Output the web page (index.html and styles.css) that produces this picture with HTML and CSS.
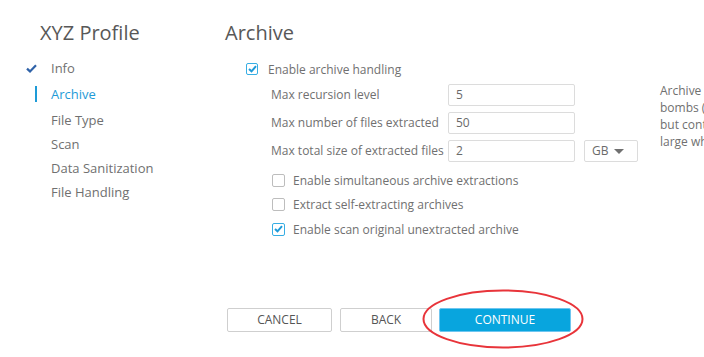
FILE: index.html
```html
<!DOCTYPE html>
<html>
<head>
<meta charset="utf-8">
<link rel="stylesheet" href="styles.css">
</head>
<body>
<div class="page">
  <aside class="sidebar">
    <h1 class="title">XYZ Profile</h1>
    <ul class="nav">
      <li class="nav-item done">
        <svg class="nav-check" width="11" height="9" viewBox="0 0 11 9"><path d="M1 4.6 L4 7.4 L10 1.2" fill="none" stroke="#2f62a8" stroke-width="2.2"/></svg>
        Info
      </li>
      <li class="nav-item active"><span class="nav-bar"></span>Archive</li>
      <li class="nav-item">File Type</li>
      <li class="nav-item">Scan</li>
      <li class="nav-item">Data Sanitization</li>
      <li class="nav-item">File Handling</li>
    </ul>
  </aside>
  <main class="main">
    <h2 class="title">Archive</h2>
    <label class="check-row master">
      <span class="box checked"><svg width="9" height="8" viewBox="0 0 9 8"><path d="M1 4 L3.5 6.3 L8 1.2" fill="none" stroke="#1f9ad8" stroke-width="2"/></svg></span>
      Enable archive handling
    </label>
    <div class="fields-wrap">
      <div class="fields">
        <span class="label">Max recursion level</span>
        <span class="input">5</span>
        <span></span>
        <span class="label">Max number of files extracted</span>
        <span class="input">50</span>
        <span></span>
        <span class="label">Max total size of extracted files</span>
        <span class="input">2</span>
        <span class="select">GB <span class="caret"></span></span>
      </div>
      <p class="help">Archive handling protects against archive<br>bombs (zip bombs), files that are small<br>but contain huge data which become very<br>large when they are extracted.</p>
    </div>
    <div class="options">
      <label class="check-row"><span class="box"></span>Enable simultaneous archive extractions</label>
      <label class="check-row"><span class="box"></span>Extract self-extracting archives</label>
      <label class="check-row"><span class="box checked"><svg width="9" height="8" viewBox="0 0 9 8"><path d="M1 4 L3.5 6.3 L8 1.2" fill="none" stroke="#1f9ad8" stroke-width="2"/></svg></span>Enable scan original unextracted archive</label>
    </div>
    <div class="actions">
      <button class="btn btn-cancel">CANCEL</button>
      <button class="btn btn-back">BACK</button>
      <button class="btn btn-primary">CONTINUE</button>
    </div>
  </main>
</div>
<svg class="annotation" width="170" height="64" viewBox="0 0 170 64"><ellipse cx="85" cy="31" rx="79.5" ry="28.5" fill="none" stroke="#e8343a" stroke-width="2"/></svg>
</body>
</html>
```

FILE: styles.css
```css
html, body {
  margin: 0;
  padding: 0;
  background: #ffffff;
  overflow: hidden;
}
body {
  width: 704px;
  height: 357px;
  position: relative;
  font-family: "Open Sans", "Liberation Sans", sans-serif;
  color: #707070;
}
.page {
  display: flex;
  width: 900px;
}
.sidebar {
  width: 225px;
  flex: none;
  padding-top: 19px;
}
.title {
  margin: 0;
  font-size: 20px;
  line-height: 27px;
  font-weight: 400;
  color: #585858;
}
.sidebar .title {
  padding-left: 40px;
}
.nav {
  list-style: none;
  margin: 10px 0 0 0;
  padding: 0;
}
.nav-item {
  position: relative;
  height: 24px;
  line-height: 24px;
  padding-left: 51px;
  font-size: 13px;
  color: #707070;
}
.nav-item.done,
.nav-item.active {
  height: 26px;
  line-height: 24px;
}
.nav-check {
  position: absolute;
  left: 26px;
  top: 8px;
}
.nav-item.active {
  color: #1e9bd7;
}
.nav-bar {
  position: absolute;
  left: 35px;
  top: 4px;
  width: 1.5px;
  height: 16px;
  background: #1e9bd7;
}
.main {
  padding-top: 19px;
  flex: none;
  width: 675px;
}
.check-row {
  display: flex;
  align-items: center;
  height: 24px;
  font-size: 12px;
  color: #707070;
}
.master {
  margin-top: 11px;
  padding-left: 21px;
}
.box {
  width: 12px;
  height: 12px;
  border: 1px solid #bdbdbd;
  border-radius: 2px;
  box-sizing: border-box;
  display: inline-flex;
  align-items: center;
  justify-content: center;
  margin-right: 10px;
  flex: none;
  background: #fff;
}
.box.checked {
  border: 1.5px solid #37aee4;
}
.fields-wrap {
  display: flex;
  margin-top: 3px;
  padding-left: 46px;
}
.fields {
  display: grid;
  grid-template-columns: 168px 127px 54px;
  column-gap: 9px;
  row-gap: 6px;
  width: 367px;
  flex: none;
}
.label {
  font-size: 12px;
  line-height: 22px;
  color: #707070;
  white-space: nowrap;
}
.input, .select {
  height: 22px;
  box-sizing: border-box;
  border: 1px solid #dcdcdc;
  border-radius: 2px;
  font-size: 12px;
  line-height: 20px;
  padding-left: 7px;
  color: #6a6a6a;
}
.select {
  display: flex;
  align-items: center;
}
.caret {
  display: inline-block;
  width: 0;
  height: 0;
  border-left: 5px solid transparent;
  border-right: 5px solid transparent;
  border-top: 5px solid #707070;
  margin-left: 6px;
}
.help {
  margin: -2px 0 0 22px;
  font-size: 12px;
  line-height: 17px;
  color: #707070;
  white-space: nowrap;
}
.options {
  margin-top: 6px;
  padding-left: 47px;
}
.options .check-row {
  height: 24.5px;
}
.options .box {
  width: 13px;
  height: 13px;
  margin-right: 8px;
}
.actions {
  display: flex;
  margin-top: 66px;
  padding-left: 2px;
}
.btn {
  height: 24px;
  box-sizing: border-box;
  border: 1px solid #cfcfcf;
  border-radius: 2px;
  background: #fff;
  font-family: "Open Sans", "Liberation Sans", sans-serif;
  font-size: 12px;
  color: #555;
  padding: 0;
  cursor: pointer;
}
.btn-cancel {
  width: 105px;
  margin-right: 8px;
}
.btn-back {
  width: 92px;
  margin-right: 7px;
}
.btn-primary {
  width: 132px;
  background: #08a5de;
  border-color: #6ec6f0;
  color: #fff;
}
.annotation {
  position: absolute;
  left: 418px;
  top: 288px;
}
```
